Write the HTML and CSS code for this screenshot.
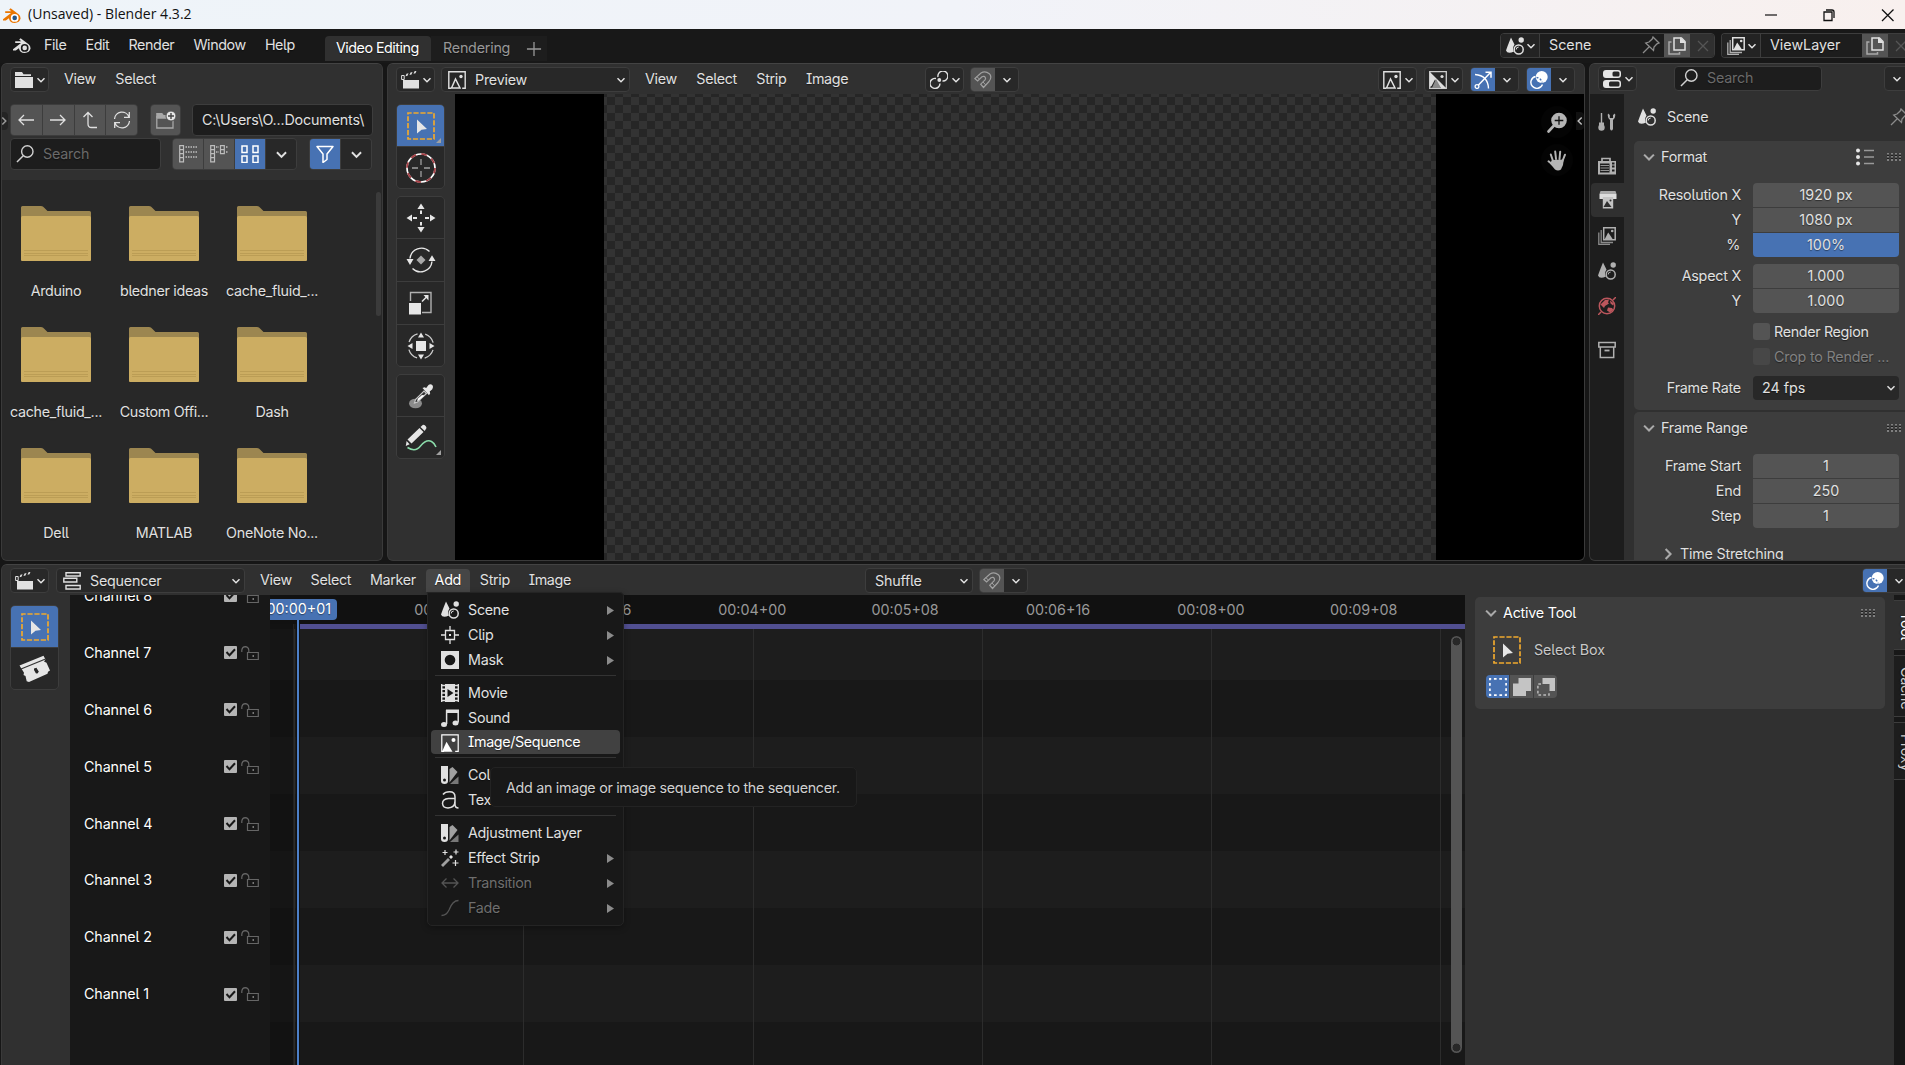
FILE: index.html
```html
<!DOCTYPE html>
<html lang="en">
<head>
<meta charset="utf-8">
<title>(Unsaved) - Blender 4.3.2</title>
<link rel="stylesheet" href="styles.css">
</head>
<body>
<svg class="defs" width="0" height="0" aria-hidden="true">
  <symbol id="logo" viewBox="0 0 20 18"><path d="M1 13.2 9 7H3.2V5.2H9.3L7.2 3.5 8.6 2.2 16.6 8.300Q19 10.300 18.600 12.600 17.700 16.800 12.600 17 7.600 16.700 6.900 12.200L3.800 14.500H1Z" fill="currentColor"/><circle cx="12.700" cy="11.900" r="3.900" fill="var(--hole,#181818)"/><circle cx="12.700" cy="11.900" r="2.300" fill="var(--eye,currentColor)"/></symbol>
  <symbol id="chev" viewBox="0 0 10 10"><path d="M1.500 3.300 5 6.800 8.500 3.300" fill="none" stroke="currentColor" stroke-width="1.500"/></symbol>
  <symbol id="files" viewBox="0 0 18 18"><path d="M0 1h7l1.500 2.300H16V5H0ZM0 6h18v11H0Z" fill="currentColor"/></symbol>
  <symbol id="clap" viewBox="0 0 18 18"><path d="M2 9h16v8.500H2Z" fill="currentColor"/><path d="M.6 4.500h2.600v4H.6Z" fill="none" stroke="currentColor" stroke-width="1"/><path d="m4.500 5.300 1-2.500 2-.5-1 2.500ZM8.500 4l1-2.500 2-.5-1 2.500ZM12.500 2.800l1-2.500 2-.5-1 2.500Z" fill="currentColor"/></symbol>
  <symbol id="image" viewBox="0 0 18 18"><path d="M3 17.200H.8V.8h16.400v16.400h-3" fill="none" stroke="currentColor" stroke-width="1.400"/><path d="m3.500 17 4-9 4.500 9Z" fill="none" stroke="currentColor" stroke-width="1.500"/><circle cx="13" cy="5.500" r="1.700" fill="currentColor"/></symbol>
  <symbol id="imagefill" viewBox="0 0 18 18"><path d="M3 17.300H.8V.8h16.400v16.500h-3" fill="none" stroke="currentColor" stroke-width="1.200"/><path d="m1 17.800 4.500-10 6 10Z" fill="currentColor"/><circle cx="12.500" cy="6" r="2" fill="currentColor"/></symbol>
  <symbol id="left" viewBox="0 0 18 18"><path d="M17 9H2M7 4 2 9l5 5" fill="none" stroke="currentColor" stroke-width="1.300"/></symbol>
  <symbol id="right" viewBox="0 0 18 18"><path d="M1 9h15M11 4l5 5-5 5" fill="none" stroke="currentColor" stroke-width="1.300"/></symbol>
  <symbol id="parent" viewBox="0 0 18 18"><path d="M7 1.500V13q0 3.500 3.500 3.500H16M2.500 6 7 1.500 11.500 6" fill="none" stroke="currentColor" stroke-width="1.300"/></symbol>
  <symbol id="refresh" viewBox="0 0 18 18"><path d="M1.500 8A7.500 7.500 0 0 1 16 6M16.500 10A7.500 7.500 0 0 1 2 12M16.300 1v5.300H11M1.700 17v-5.300H7" fill="none" stroke="currentColor" stroke-width="1.300"/></symbol>
  <symbol id="newfolder" viewBox="0 0 20 18"><path d="M.8 17V5M.8 7H17v10H.8Z" fill="none" stroke="#a8a8a8" stroke-width="1.300"/><path d="M.2 2h6l1.500 2h3v3H.2Z" fill="#a8a8a8"/><circle cx="15" cy="5" r="5" fill="#e6e6e6" stroke="#545454"/><path d="M12 5h6M15 2v6" stroke="#444" stroke-width="1.400"/></symbol>
  <symbol id="search" viewBox="0 0 18 18"><circle cx="11.300" cy="6.500" r="5.700" fill="none" stroke="currentColor" stroke-width="1.400"/><path d="M7.200 10.700 1 17" stroke="currentColor" stroke-width="1.500"/></symbol>
  <symbol id="vlist" viewBox="0 0 18 18"><path d="M.7.7h3.800v16.200H.7ZM.7 4.700h3.800M.7 8.700h3.800M.7 12.700h3.800" fill="none" stroke="#bdbdbd" stroke-width="1.200"/><path d="M6.500 2h11.500M6.500 7h11.500M6.500 12h11.500" stroke="#bdbdbd" stroke-width="1.500" stroke-dasharray="1.500 1"/></symbol>
  <symbol id="hlist" viewBox="0 0 18 18"><path d="M.7.7h3.800v16.200H.7ZM.7 4.700h3.800M.7 8.700h3.800M.7 12.700h3.800M10.500.7h3.800v8h-3.800ZM10.500 4.700h3.800" fill="none" stroke="#bdbdbd" stroke-width="1.200"/><path d="M6 2h3M6 7h3M16 2h2M16 7h2" stroke="#bdbdbd" stroke-width="1.500" stroke-dasharray="1.500 1"/></symbol>
  <symbol id="thumbs" viewBox="0 0 18 18"><path d="M1 1h5v6.500H1ZM12 1h5v6.500h-5ZM1 11h5v6.500H1ZM12 11h5v6.500h-5Z" fill="none" stroke="#fff" stroke-width="1.500"/></symbol>
  <symbol id="filter" viewBox="0 0 18 18"><path d="M1 1.500h16L11 9v5.500L7 17.500V9Z" fill="none" stroke="#fff" stroke-width="1.500" stroke-linejoin="round"/></symbol>
  <symbol id="folder" viewBox="0 0 70 56"><path d="M0 2.500Q0 1 1.500 1H20q2 0 3.500 2l3 3H68.500Q70 6 70 7.500V30H0Z" fill="#9c8650"/><path d="M0 12.500Q0 11 1.500 11h67q1.500 0 1.500 1.500V55q0 1-1 1H1q-1 0-1-1Z" fill="#ccad62"/><path d="M3 45.500h64M3 48.500h64M3 50.500h64" stroke="#bb9d55"/></symbol>
  <symbol id="selbox" viewBox="0 0 28 28"><rect x="1" y="1" width="26" height="26" fill="none" stroke="#f0a92e" stroke-width="1.700" stroke-dasharray="5.200 1.740" stroke-dashoffset="1.500"/><path d="m10 7.500 10 9.500-5.500.7L10 21.500Z" fill="#e6e6e6"/></symbol>
  <symbol id="cursor3d" viewBox="0 0 30 30"><circle cx="15" cy="15" r="14" fill="none" stroke="#fff" stroke-width="1.700"/><circle cx="15" cy="15" r="14" fill="none" stroke="#a64147" stroke-width="1.800" stroke-dasharray="5.500 5.500"/><path d="M15 6v6M15 18v6M6 15h6M18 15h6" stroke="#a0a0a0" stroke-width="1.300"/></symbol>
  <symbol id="move" viewBox="0 0 30 30"><path d="m15 .5 3.600 5.500h-7.200ZM15 29.500l-3.600-5.500h7.200ZM.5 15 6 11.400v7.200ZM29.500 15 24 11.400v7.200Z" fill="#e6e6e6"/><path d="M15 7.500v3.500M15 19v3.500M7 15h4M19 15h4" stroke="#e6e6e6" stroke-width="2"/></symbol>
  <symbol id="rotate" viewBox="0 0 30 30"><path d="M4 13.500A11.500 11.500 0 0 1 23.500 6.500M26 16.500A11.500 11.500 0 0 1 6.500 23.500" fill="none" stroke="#e6e6e6" stroke-width="1.400"/><path d="M.5 14h7L4 20ZM22.500 16h7L26 10.200Z" fill="#e6e6e6"/><path d="m15 10.500 4.500 4.500-4.500 4.500-4.500-4.500Z" fill="#a8a8a8"/></symbol>
  <symbol id="scale" viewBox="0 0 24 24"><path d="M1.500 10V1.500H22v20h-9" fill="none" stroke="#b0b0b0" stroke-width="1.400"/><rect y="12" width="12" height="11.500" fill="#e6e6e6"/><path d="m13 10.500 5-5" stroke="#e6e6e6" stroke-width="1.400"/><path d="M14.500 4h5v5.500Z" fill="#e6e6e6"/></symbol>
  <symbol id="xform" viewBox="0 0 28 28"><circle cx="14" cy="14" r="12.600" fill="none" stroke="#ccc" stroke-width="1.300" stroke-dasharray="12 7.790" stroke-dashoffset="-3.900"/><path d="M9 9h10v10H9ZM14 .5l3 5h-6ZM14 27.500l-3-5h6ZM.5 14l5-3v6ZM27.500 14l-5-3v6Z" fill="#e6e6e6"/></symbol>
  <symbol id="dropper" viewBox="0 0 28 28"><ellipse cx="8.500" cy="21.500" rx="6.500" ry="4.800" fill="#8b8b8b"/><path d="m7.500 21 1-3.500L17 9l2.500 2.500-9 8.500Z" fill="#333" stroke="#c4c4c4" stroke-width="1.200"/><path d="m10 19 1-2.500 4-3.500 2.500.5-6 5Z" fill="#fff"/><path d="m15.500 6 2-.8 1.700.8L21.500 3q2-1.800 4 .3 1.300 2-.2 4L22.700 9.500l.5 1.700-1.200 2Z" fill="#e6e6e6"/></symbol>
  <symbol id="annotate" viewBox="0 0 32 28"><path d="M2.500 23.500q8 5 13-1.500 6-7 11-4.500 3.500 2 4.500 5.500" fill="none" stroke="#8bdcaa" stroke-width="1.500"/><path d="m.8 22 .8-5 3 3.200ZM2.500 15.500 14.500 4 18.500 8 6.500 19.500ZM15.500 3 18 .8q3 .2 3.500 3.200L19.700 7Z" fill="#e6e6e6"/></symbol>
  <symbol id="pivot" viewBox="0 0 18 18"><path d="M6 7.500A5 5 0 1 0 10 12.500M8 6A5 5 0 1 1 12.500 10" fill="none" stroke="currentColor" stroke-width="1.400"/><circle cx="9.300" cy="9" r="1.900" fill="currentColor"/></symbol>
  <symbol id="magnet" viewBox="0 0 18 18"><path d="M.8 7.500 3.600 10 8 5.800q2.300-1.300 3.400 1 .4 1-.4 2L6.700 13.200 9.500 16.500 15 10.500Q18.500 6 15.300 2.700 11.200-.6 7 2Z" fill="none" stroke="#a0a0a0" stroke-width="1.200"/><path d="m2.800 5.500 2.600 2.600M9 11l2.800 3" stroke="#a0a0a0"/></symbol>
  <symbol id="alpha" viewBox="0 0 18 18"><path d="M.7.7h16.600v16.600H.7Z" fill="none" stroke="#ccc" stroke-width="1.300"/><path d="M.7.7 17.300 17.300H12L6 8.500 2.500 15 .7 16Z" fill="#ddd"/><path d="m3 17 4-9 5 9Z" fill="#8b8b8b"/><circle cx="13" cy="5.500" r="1.600" fill="#ddd"/></symbol>
  <symbol id="gizmo" viewBox="0 0 18 18"><path d="M1 3.500Q14 4.500 14.500 17.500" fill="none" stroke="#fff" stroke-width="1.400"/><path d="m4 14.500 12.500-13M11.500 1.200H17v5.500" fill="none" stroke="#fff" stroke-width="1.500"/><circle cx="3" cy="15.500" r="1.900" fill="#4772b3" stroke="#fff" stroke-width="1.300"/></symbol>
  <symbol id="overlay" viewBox="0 0 18 18"><circle cx="11.700" cy="6" r="6" fill="#fff"/><path d="M5.500 5.500A6 6 0 1 0 12.500 13.500" fill="none" stroke="#fff" stroke-width="1.400"/><path d="M6.500 6.500A6 6 0 0 1 12 11.500" fill="none" stroke="#4772b3" stroke-width="1.400" stroke-dasharray="2 1.500"/></symbol>
  <symbol id="zoomin" viewBox="0 0 20 21"><circle cx="12" cy="8.500" r="7.800" fill="#b4b4b4"/><path d="m7 13.500-5.500 6" stroke="#b4b4b4" stroke-width="2.600" stroke-linecap="round"/><path d="M12 4.200v8.600M7.700 8.500h8.600" stroke="#111" stroke-width="1.300"/></symbol>
  <symbol id="hand" viewBox="0 0 20 21"><path d="M6 11 3.800 4.500M9 9 8.200 1.500M12.500 9l.7-7.300M15.500 11l2.500-6.300M6 15 1.500 11.300" stroke="#b4b4b4" stroke-width="2" stroke-linecap="round"/><path d="M5 10 16.500 9.500Q17 15 14 19.500 11 21.500 8 19.500L3 13.500Z" fill="#b4b4b4"/></symbol>
  <symbol id="tools" viewBox="0 0 18 18"><path d="M3.500 0v10" stroke="currentColor" stroke-width="1.400"/><path d="M1 9.500h5v2.500H1Z" fill="currentColor"/><circle cx="3.500" cy="14.500" r="3.200" fill="currentColor"/><path d="M10 .5 11.800 2v3h3.200V2L17 .5q1 4-2 6.500V16q-1.500 3-3 0V7Q9 4.500 10 .5Z" fill="currentColor"/></symbol>
  <symbol id="render" viewBox="0 0 18 18"><path d="M4 4V1.500h8V4" fill="none" stroke="currentColor" stroke-width="1.700"/><path d="M0 4h18v13.500H0Z" fill="currentColor"/><path d="M2 6.500h9.500v9H2Z" fill="#1d1d1d"/><path d="M2.500 8.500h8.500M2.500 11h8.500M2.500 13.500h8.500" stroke="currentColor" stroke-width=".8"/><path d="M14 6.500h2.500M14 9.500h2.500M14 13.500h2.500" stroke="#1d1d1d" stroke-width="1.800"/></symbol>
  <symbol id="output" viewBox="0 0 18 18"><path d="M.5 3h17v5h-17Z" fill="#ddd"/><path d="M1.500 0h15l1 3H.5Z" fill="#aaa"/><path d="M3.800 6h10.400v11.500H3.800Z" fill="#c4c4c4"/><path d="m4.500 16 3.500-6 4.500 6Z" fill="#303030"/><circle cx="11.500" cy="9.500" r="1" fill="#303030"/></symbol>
  <symbol id="vlayer" viewBox="0 0 18 18"><path d="M5.700.8h11.500v12H5.700Z" fill="none" stroke="currentColor" stroke-width="1.500"/><path d="m6.500 12.500 3.700-7 4.800 7Z" fill="currentColor"/><circle cx="14.200" cy="4" r="1.300" fill="currentColor"/><path d="M3.200 3v12.500H15M.8 5.500V17.300H12" fill="none" stroke="currentColor" stroke-opacity=".75" stroke-width="1.300"/></symbol>
  <symbol id="scene" viewBox="0 0 18 18"><path d="M5 .5q1.500 3 3.500 7-1.500 2-1.500 5l1 2Q1.500 17.500 0 13.500 1.500 9 5 .5Z" fill="currentColor"/><circle cx="15.200" cy="3" r="2.700" fill="currentColor"/><circle cx="12.700" cy="12.500" r="4.500" fill="none" stroke="currentColor" stroke-width="1.500"/><path d="M10.200 12.500q0-2.500 2.500-2.500" fill="none" stroke="currentColor"/></symbol>
  <symbol id="world" viewBox="0 0 18 18"><circle cx="9" cy="9" r="7.700" fill="none" stroke="#bb565c" stroke-width="1.500"/><path d="M2.500 7.500 7 3l4-.5-1 3 1 1-4 2.500-1 2ZM10 10.500l4 .5 1.500 2-3.500 2.500-3-2ZM12 3.500l4 3-1 2-2.500-2Z" fill="#bb565c"/><path d="m0 18 3-3M15 3l3-3" stroke="#bb565c" stroke-width="1.500"/></symbol>
  <symbol id="archive" viewBox="0 0 18 18"><path d="M.8 1.500h16.400V6H.8ZM2.300 6v10.500h13.400V6" fill="none" stroke="currentColor" stroke-width="1.500"/><path d="M6.500 9.500h5" stroke="currentColor" stroke-width="1.800"/></symbol>
  <symbol id="pin" viewBox="0 0 18 18"><path d="m11 1 6 6-2 .8-3 3.200-.5 3.500L3.700 7 7 6l3.200-3ZM7 11l-6 6" fill="none" stroke="#8b8b8b" stroke-width="1.300"/></symbol>
  <symbol id="copy" viewBox="0 0 18 18"><path d="M6 1h7.500L17 4.500V13H6Z" fill="none" stroke="#e0e0e0" stroke-width="1.500"/><path d="M12 0v6h6Z" fill="#e0e0e0"/><path d="M3.500 5H1v12h10.500v-2" fill="none" stroke="#a8a8a8" stroke-width="1.500"/></symbol>
  <symbol id="cross" viewBox="0 0 12 12"><path d="m1 1 10 10M11 1 1 11" stroke="currentColor" stroke-width="1.300"/></symbol>
  <symbol id="props" viewBox="0 0 18 18"><rect y="0" width="18" height="8" rx="3" fill="#e6e6e6"/><rect x="9.500" y="1.500" width="7" height="5" rx="1.500" fill="#282828"/><rect y="10" width="18" height="8" rx="3" fill="#e6e6e6"/><rect x="6" y="11.500" width="10.500" height="5" rx="1.500" fill="#282828"/></symbol>
  <symbol id="presets" viewBox="0 0 18 18"><circle cx="2" cy="2.500" r="2" fill="#e6e6e6"/><circle cx="2" cy="9" r="2" fill="#e6e6e6"/><circle cx="2" cy="15.500" r="2" fill="#e6e6e6"/><path d="M8 2.500h10M8 9h10M8 15.500h10" stroke="#999" stroke-width="1.300"/></symbol>
  <symbol id="grip" viewBox="0 0 15 8"><path d="M0 1h15M0 4h15M0 7h15" stroke="#979797" stroke-width="1.500" stroke-dasharray="2 2"/><path d="M0 2.200h15M0 5.200h15" stroke="#111" stroke-dasharray="2 2"/></symbol>
  <symbol id="seq" viewBox="0 0 18 18"><path d="M3 .8h14.200V4H3ZM.8 6.300h13V10H.8ZM3 13.500h14.200V17H3Z" fill="none" stroke="currentColor" stroke-width="1.400"/></symbol>
  <symbol id="blade" viewBox="0 0 32 28"><path d="M.5 10.500 24.500.8l2 3.700-1.500 2 2.500 1.200L31 15.500l-2 1.200-.5 2L10 27l-2.300-.7L6.500 21l-2-1 .5-2.300Z" fill="#e6e6e6"/><path d="m2 14 24.500-10" stroke="#333" stroke-width="1.200"/><path d="m15 13.500 2.500-.8 2 3.500-.5 2-2 .3-2-3.500Z" fill="#282828"/></symbol>
  <symbol id="check" viewBox="0 0 13 13"><rect width="13" height="13" rx="1" fill="#b4b4b4"/><path d="m2.500 6 3 3.300 5.500-6" fill="none" stroke="#181818" stroke-width="2"/></symbol>
  <symbol id="lock" viewBox="0 0 18 14"><path d="M.8 6V4q.5-3 3.500-3.300Q7.500 1 7.800 4v2M6.500 6.500h10.800v7H6.500Z" fill="none" stroke="#666" stroke-width="1.200"/><path d="M11.500 9h1.500v2h-1.500Z" fill="#777"/></symbol>
  <symbol id="clip" viewBox="0 0 18 18"><path d="M9 0v4M9 14v4M0 9h4M14 9h4M4.500 4.500h9v9h-9Z" fill="none" stroke="currentColor" stroke-width="1.300"/><path d="M8 8h2v2H8Z" fill="currentColor"/></symbol>
  <symbol id="mask" viewBox="0 0 18 18"><path d="M0 0h18v18H0Z" fill="currentColor"/><circle cx="9" cy="9" r="5.300" fill="#181818"/></symbol>
  <symbol id="movie" viewBox="0 0 18 18"><path d="M4 0h10v18H4Z" fill="currentColor"/><path d="M.7 0v18M17.300 0v18M0 1.500h4M0 5.200h4M0 9h4M0 12.800h4M0 16.500h4M14 1.500h4M14 5.200h4M14 9h4M14 12.800h4M14 16.500h4" stroke="currentColor" stroke-width="1.400"/><path d="m6.500 5 6 4-6 4Z" fill="#181818"/></symbol>
  <symbol id="sound" viewBox="0 0 18 18"><path d="M5 .5h13v3.500H5Z" fill="currentColor"/><path d="M5.600 1v14M17.200 1v12.500" stroke="currentColor" stroke-width="1.500"/><ellipse cx="3" cy="15.500" rx="3" ry="2.500" fill="currentColor"/><ellipse cx="14.500" cy="14" rx="3" ry="2.500" fill="currentColor"/></symbol>
  <symbol id="color" viewBox="0 0 18 18"><path d="M0 0h7v15q0 3-3.500 3T0 15Z" fill="currentColor"/><path d="m8.500 3 3-2 5 5-8 10.500Z" fill="#a0a0a0"/><path d="M17.500 10.500V18H9Z" fill="#777"/><circle cx="3.500" cy="14" r="1.500" fill="#181818"/></symbol>
  <symbol id="glyph" viewBox="0 0 18 18"><path d="M2 3.500Q4 .8 8.500.8 14 .8 14 6v7.500q0 3.500 3.500 3.500M14 7.500H7.500Q1.500 8 1.500 12.500 2 17 7 17q7-.5 7-7" fill="none" stroke="currentColor" stroke-width="1.500"/></symbol>
  <symbol id="wand" viewBox="0 0 18 18"><path d="M1 17 8 10" stroke="#a0a0a0" stroke-width="2.800"/><path d="m9 9 2-2" stroke="#e6e6e6" stroke-width="2.800"/><path d="M4 1v5M1.500 3.500h5M15 .5v5M12.500 3h5M14.500 11v6M11.500 14h6" stroke="currentColor" stroke-width="1.200"/></symbol>
  <symbol id="trans" viewBox="0 0 18 18"><path d="M1.500 9h15M5.500 4.500 1 9l4.500 4.500M12.500 4.500 17 9l-4.500 4.500" fill="none" stroke="currentColor" stroke-width="1.300"/></symbol>
  <symbol id="fade" viewBox="0 0 18 18"><path d="M.5 16.500Q5.500 16.500 8 11 11.500 1.500 17.500 1.500" fill="none" stroke="currentColor" stroke-width="1.300"/></symbol>
  <symbol id="arrow" viewBox="0 0 7 9"><path d="M0 0 7 4.500 0 9Z" fill="#8b8b8b"/></symbol>
  <symbol id="mset" viewBox="0 0 18 18"><path d="M.9.900h16.200v16.200H.9Z" fill="none" stroke="#fff" stroke-width="1.700" stroke-dasharray="2.700 2.700" stroke-dashoffset="1.400"/></symbol>
  <symbol id="madd" viewBox="0 0 18 18"><path d="M5.500 0H18v13h-5v5H0V5.500h5.500Z" fill="#c4c4c4"/></symbol>
  <symbol id="msub" viewBox="0 0 18 18"><path d="M5.500 0H18v13h-5.500V6h-7Z" fill="#c4c4c4"/><path d="M4 6H.9v11.100H12V14" fill="none" stroke="#bbb" stroke-width="1.500" stroke-dasharray="2.700 2.200"/></symbol>
</svg>

<div class="titlebar">
  <svg class="app-icon"><use href="#logo"/></svg><span class="title">(Unsaved) - Blender 4.3.2</span>
  <svg class="win" viewBox="0 0 130 16"><path d="M1 8h12" stroke="#111" stroke-width="1.200"/><path d="M60 5h8v8.500h-8ZM62 3h6q2 0 2 2v6" fill="none" stroke="#111" stroke-width="1.300"/><path d="m118 2.500 11.500 11.500M129.500 2.500 118 14" stroke="#111" stroke-width="1.300"/></svg>
</div>

<div class="topbar">
  <svg class="logo"><use href="#logo"/></svg>
  <nav class="menus"><span>File</span><span>Edit</span><span>Render</span><span>Window</span><span>Help</span></nav>
  <div class="tabs"><span class="tab on">Video Editing</span><span class="tab">Rendering</span><span class="tab plus"><svg class="i12"><use href="#cross"/></svg></span></div>
  <div class="idblock scene-id"><span class="dd"><svg class="i18"><use href="#scene"/></svg><svg class="chev"><use href="#chev"/></svg></span><span class="name">Scene<svg class="i18"><use href="#pin"/></svg></span><span class="cp"><svg class="i18"><use href="#copy"/></svg></span><span class="x"><svg class="i12"><use href="#cross"/></svg></span></div>
  <div class="idblock layer-id"><span class="dd"><svg class="i18"><use href="#vlayer"/></svg><svg class="chev"><use href="#chev"/></svg></span><span class="name">ViewLayer</span><span class="cp"><svg class="i18"><use href="#copy"/></svg></span><span class="x"><svg class="i12"><use href="#cross"/></svg></span></div>
</div>

<div class="upper">
  <section class="area files">
    <header class="head"><span class="btn dd"><svg class="i18"><use href="#files"/></svg><svg class="chev"><use href="#chev"/></svg></span><nav class="menus m16"><span>View</span><span>Select</span></nav></header>
    <div class="frow">
      <span class="edge-tab"><svg class="chev r270"><use href="#chev"/></svg></span>
      <div class="group g4"><span><svg class="i18"><use href="#left"/></svg></span><span><svg class="i18"><use href="#right"/></svg></span><span><svg class="i18"><use href="#parent"/></svg></span><span><svg class="i18"><use href="#refresh"/></svg></span></div>
      <div class="group newf"><span><svg class="i20"><use href="#newfolder"/></svg></span></div>
      <div class="path">C:\Users\O...Documents\</div>
    </div>
    <div class="frow second">
      <div class="field"><svg class="i18"><use href="#search"/></svg>Search</div>
      <div class="group disp"><span><svg class="i18"><use href="#vlist"/></svg></span><span><svg class="i18"><use href="#hlist"/></svg></span><span class="blue"><svg class="i18"><use href="#thumbs"/></svg></span><span class="dark"><svg class="chev big"><use href="#chev"/></svg></span></div>
      <div class="group filt"><span class="blue"><svg class="i18"><use href="#filter"/></svg></span><span class="dark"><svg class="chev big"><use href="#chev"/></svg></span></div>
    </div>
    <div class="list">
      <div class="grid">
        <figure><svg><use href="#folder"/></svg><figcaption>Arduino</figcaption></figure>
        <figure><svg><use href="#folder"/></svg><figcaption>bledner ideas</figcaption></figure>
        <figure><svg><use href="#folder"/></svg><figcaption>cache_fluid_...</figcaption></figure>
        <figure><svg><use href="#folder"/></svg><figcaption>cache_fluid_...</figcaption></figure>
        <figure><svg><use href="#folder"/></svg><figcaption>Custom Offi...</figcaption></figure>
        <figure><svg><use href="#folder"/></svg><figcaption>Dash</figcaption></figure>
        <figure><svg><use href="#folder"/></svg><figcaption>Dell</figcaption></figure>
        <figure><svg><use href="#folder"/></svg><figcaption>MATLAB</figcaption></figure>
        <figure><svg><use href="#folder"/></svg><figcaption>OneNote No...</figcaption></figure>
      </div>
      <div class="thumb"></div>
    </div>
  </section>

  <section class="area preview">
    <header class="head">
      <span class="btn dd"><svg class="i18"><use href="#clap"/></svg><svg class="chev"><use href="#chev"/></svg></span>
      <span class="btn select"><svg class="i18"><use href="#image"/></svg><b>Preview</b><svg class="chev"><use href="#chev"/></svg></span>
      <nav class="menus m16"><span>View</span><span>Select</span><span>Strip</span><span>Image</span></nav>
      <span class="btn dd pivot"><svg class="i18"><use href="#pivot"/></svg><svg class="chev"><use href="#chev"/></svg></span>
      <span class="btn pair"><i class="grey"><svg class="i18"><use href="#magnet"/></svg></i><i><svg class="chev"><use href="#chev"/></svg></i></span>
      <span class="spring"></span>
      <span class="btn dd"><svg class="i18"><use href="#image"/></svg><svg class="chev"><use href="#chev"/></svg></span>
      <span class="btn dd"><svg class="i18"><use href="#alpha"/></svg><svg class="chev"><use href="#chev"/></svg></span>
      <span class="btn pair"><i class="blue"><svg class="i18"><use href="#gizmo"/></svg></i><i><svg class="chev"><use href="#chev"/></svg></i></span>
      <span class="btn pair last"><i class="blue"><svg class="i18"><use href="#overlay"/></svg></i><i><svg class="chev"><use href="#chev"/></svg></i></span>
    </header>
    <div class="pbody">
      <div class="toolcol">
        <div class="tools"><span class="blue corner"><svg class="i28"><use href="#selbox"/></svg></span><span><svg class="i30"><use href="#cursor3d"/></svg></span></div>
        <div class="tools"><span><svg class="i30"><use href="#move"/></svg></span><span><svg class="i30"><use href="#rotate"/></svg></span><span><svg class="i24"><use href="#scale"/></svg></span><span><svg class="i28"><use href="#xform"/></svg></span></div>
        <div class="tools"><span><svg class="i28"><use href="#dropper"/></svg></span><span class="corner"><svg class="i32"><use href="#annotate"/></svg></span></div>
      </div>
      <div class="viewport"><div class="checker"></div><div class="navs"><span><svg class="i20 tall"><use href="#zoomin"/></svg></span><span><svg class="i20 tall"><use href="#hand"/></svg></span></div><span class="edge-tab rt"><svg class="chev r90"><use href="#chev"/></svg></span></div>
    </div>
  </section>

  <section class="area properties">
    <header class="head"><span class="btn dd"><svg class="i18"><use href="#props"/></svg><svg class="chev"><use href="#chev"/></svg></span><div class="field small"><svg class="i18"><use href="#search"/></svg>Search</div><span class="btn opt"><svg class="chev"><use href="#chev"/></svg></span></header>
    <div class="prbody">
      <div class="ptabs"><span class="first"><svg class="i18"><use href="#tools"/></svg></span><span><svg class="i18"><use href="#render"/></svg></span><span class="on"><svg class="i18"><use href="#output"/></svg></span><span><svg class="i18"><use href="#vlayer"/></svg></span><span><svg class="i18"><use href="#scene"/></svg></span><span><svg class="i18"><use href="#world"/></svg></span><span class="lastt"><svg class="i18"><use href="#archive"/></svg></span></div>
      <div class="pmain">
        <div class="crumb"><svg class="i18"><use href="#scene"/></svg>Scene<svg class="i18 pinr"><use href="#pin"/></svg></div>
        <div class="panel format">
          <div class="ptitle"><svg class="chev tri"><use href="#chev"/></svg><span>Format</span><svg class="i18 pre"><use href="#presets"/></svg><svg class="grip"><use href="#grip"/></svg></div>
          <div class="rows">
            <label>Resolution X</label><div class="num top">1920 px</div>
            <label>Y</label><div class="num">1080 px</div>
            <label class="pct">%</label><div class="num bot fill">100%</div>
            <label class="sp">Aspect X</label><div class="num top sp">1.000</div>
            <label>Y</label><div class="num bot">1.000</div>
            <div class="cb sp"><i></i>Render Region</div>
            <div class="cb off"><i></i>Crop to Render ...</div>
            <label class="sp2">Frame Rate</label><div class="enum sp2">24 fps<svg class="chev"><use href="#chev"/></svg></div>
          </div>
        </div>
        <div class="panel range">
          <div class="ptitle"><svg class="chev tri"><use href="#chev"/></svg><span>Frame Range</span><svg class="grip"><use href="#grip"/></svg></div>
          <div class="rows">
            <label>Frame Start</label><div class="num top">1</div>
            <label>End</label><div class="num">250</div>
            <label>Step</label><div class="num bot">1</div>
          </div>
          <div class="sub"><svg class="chev tri r270"><use href="#chev"/></svg>Time Stretching</div>
        </div>
      </div>
    </div>
  </section>
</div>

<section class="area sequencer">
  <header class="head">
    <span class="btn dd"><svg class="i18"><use href="#clap"/></svg><svg class="chev"><use href="#chev"/></svg></span>
    <span class="btn select"><svg class="i18"><use href="#seq"/></svg><b>Sequencer</b><svg class="chev"><use href="#chev"/></svg></span>
    <nav class="menus seqm"><span>View</span><span>Select</span><span>Marker</span><span class="open">Add</span><span>Strip</span><span>Image</span></nav>
    <span class="btn select shuffle"><b>Shuffle</b><svg class="chev"><use href="#chev"/></svg></span>
    <span class="btn pair"><i class="grey"><svg class="i18"><use href="#magnet"/></svg></i><i><svg class="chev"><use href="#chev"/></svg></i></span>
    <span class="btn pair ovl"><i class="blue"><svg class="i18"><use href="#overlay"/></svg></i><i><svg class="chev"><use href="#chev"/></svg></i></span>
  </header>
  <div class="sbody">
    <div class="toolcol"><div class="tools"><span class="blue"><svg class="i28"><use href="#selbox"/></svg></span><span><svg class="i32"><use href="#blade"/></svg></span></div></div>
    <div class="channels">
      <div>Channel 8<svg class="ck"><use href="#check"/></svg><svg class="lk"><use href="#lock"/></svg></div>
      <div>Channel 7<svg class="ck"><use href="#check"/></svg><svg class="lk"><use href="#lock"/></svg></div>
      <div>Channel 6<svg class="ck"><use href="#check"/></svg><svg class="lk"><use href="#lock"/></svg></div>
      <div>Channel 5<svg class="ck"><use href="#check"/></svg><svg class="lk"><use href="#lock"/></svg></div>
      <div>Channel 4<svg class="ck"><use href="#check"/></svg><svg class="lk"><use href="#lock"/></svg></div>
      <div>Channel 3<svg class="ck"><use href="#check"/></svg><svg class="lk"><use href="#lock"/></svg></div>
      <div>Channel 2<svg class="ck"><use href="#check"/></svg><svg class="lk"><use href="#lock"/></svg></div>
      <div>Channel 1<svg class="ck"><use href="#check"/></svg><svg class="lk"><use href="#lock"/></svg></div>
    </div>
    <div class="timeline">
      <div class="ruler"><span>00:01+08</span><span>00:02+16</span><span>00:04+00</span><span>00:05+08</span><span>00:06+16</span><span>00:08+00</span><span>00:09+08</span></div>
      <div class="rangebar"></div>
      <div class="tracks"></div>
      <div class="before"></div>
      <div class="playhead"></div><div class="frame">00:00+01</div>
      <div class="vscroll"></div>
    </div>
    <aside class="side">
      <div class="panel">
        <div class="ptitle"><svg class="chev tri"><use href="#chev"/></svg><span>Active Tool</span><svg class="grip"><use href="#grip"/></svg></div>
        <div class="tool"><svg class="i28"><use href="#selbox"/></svg>Select Box</div>
        <div class="modes"><span class="blue"><svg class="i18"><use href="#mset"/></svg></span><span><svg class="i18"><use href="#madd"/></svg></span><span><svg class="i18"><use href="#msub"/></svg></span></div>
      </div>
    </aside>
    <div class="vtabs"><span class="on">Tool</span><span class="cache">Cache</span><span class="proxy">Proxy</span></div>
  </div>
</section>

<div class="popup">
  <div class="item"><svg class="i18"><use href="#scene"/></svg>Scene<svg class="arr"><use href="#arrow"/></svg></div>
  <div class="item"><svg class="i18 mid"><use href="#clip"/></svg>Clip<svg class="arr"><use href="#arrow"/></svg></div>
  <div class="item"><svg class="i18"><use href="#mask"/></svg>Mask<svg class="arr"><use href="#arrow"/></svg></div>
  <hr>
  <div class="item"><svg class="i18"><use href="#movie"/></svg>Movie</div>
  <div class="item"><svg class="i18"><use href="#sound"/></svg>Sound</div>
  <div class="item hot"><svg class="i18"><use href="#imagefill"/></svg>Image/Sequence</div>
  <hr>
  <div class="item"><svg class="i18"><use href="#color"/></svg>Color</div>
  <div class="item"><svg class="i18"><use href="#glyph"/></svg>Text</div>
  <hr>
  <div class="item"><svg class="i18"><use href="#color"/></svg>Adjustment Layer</div>
  <div class="item"><svg class="i18"><use href="#wand"/></svg>Effect Strip<svg class="arr"><use href="#arrow"/></svg></div>
  <div class="item off"><svg class="i18"><use href="#trans"/></svg>Transition<svg class="arr"><use href="#arrow"/></svg></div>
  <div class="item off"><svg class="i18"><use href="#fade"/></svg>Fade<svg class="arr"><use href="#arrow"/></svg></div>
</div>
<div class="tooltip">Add an image or image sequence to the sequencer.</div>
</body>
</html>
```

FILE: styles.css
```css
* { box-sizing: border-box; }
body {
  margin: 0; width: 1905px; height: 1065px; overflow: hidden; position: relative;
  display: flex; flex-direction: column; background: #161616; color: #e0e0e0;
  font: 14.3px/20px Inter, "Liberation Sans", sans-serif; letter-spacing: -.22px;
  font-feature-settings: "ss04", "cv05", "cv08"; white-space: nowrap;
  text-shadow: 0 1px 1px rgba(0,0,0,.45);
}
.defs { position: absolute; }
svg { flex: none; display: block; }
.i12 { width: 12px; height: 12px; } .i18 { width: 18px; height: 18px; } .i20 { width: 20px; height: 18px; }
.i20.tall { height: 21px; }
.i24 { width: 24px; height: 24px; } .i28 { width: 28px; height: 28px; } .i30 { width: 30px; height: 30px; } .i32 { width: 32px; height: 28px; }
.chev { width: 10px; height: 10px; }
.chev.big { width: 13px; height: 13px; }
.chev.tri { width: 14px; height: 14px; color: #aaa; }
.r90 { transform: rotate(90deg); } .r270 { transform: rotate(-90deg); }
.blue { background: #4772b3 !important; }

.titlebar {
  height: 29px; flex: none; display: flex; align-items: center; padding: 0 11px 0 2px;
  background: linear-gradient(90deg, #eef4f9, #f1f3f9 50%, #f8f0ee); color: #111; text-shadow: none;
}
.app-icon { width: 20px; height: 18px; color: #ea7600; --hole: #fff; --eye: #265787; margin-right: 6px; }
.title { font: 14px/20px "Open Sans", sans-serif; letter-spacing: .03px; padding-bottom: 1px; }
.win { width: 130px; height: 16px; margin-left: auto; }

.topbar { height: 34px; flex: none; display: flex; background: #181818; position: relative; padding-left: 12px; }
.logo { width: 20px; height: 18px; margin: 7px 12px 0 0; }
.menus { display: flex; gap: 19.400px; flex: none; letter-spacing: -.3px; }
.topbar .menus { padding-top: 6px; width: 281px; gap: 19.100px; letter-spacing: -.4px; }
.tabs { display: flex; margin-top: 7px; height: 25px; flex: none; }
.tab { background: #1d1d1d; color: #989898; padding: 2px 12px 0 12px; width: 91px; }
.tab.on { background: #303030; color: #fff; width: 106px; padding-left: 11px; border-radius: 4px 4px 0 0; letter-spacing: -.5px; }
.tab.plus { width: 25px; padding: 7px 6px; }
.plus svg { transform: rotate(45deg); }
.idblock { display: flex; height: 25px; margin-top: 4px; border: 1px solid #3d3d3d; border-radius: 4px; background: #1d1d1d; overflow: hidden; letter-spacing: 0; flex: none; }
.idblock > span { display: flex; align-items: center; flex: none; }
.idblock .dd { width: 39px; background: #232323; border-right: 1px solid #3d3d3d; padding-left: 5px; gap: 2px; }
.idblock .name { width: 124px; padding: 0 4px 1px 9px; justify-content: space-between; }
.idblock .cp { width: 26px; background: #545454; justify-content: center; }
.idblock .x { width: 25px; background: #303030; color: #555; justify-content: center; }
.scene-id { width: 215px; margin-left: auto; margin-right: 6px; }
.layer-id { width: 184px; border-right: 0; border-radius: 4px 0 0 4px; }
.layer-id .name { width: 101px; }

.upper { height: 498px; flex: none; display: flex; gap: 4px; padding-left: 1px; margin-bottom: 3px; }
.area { background: #303030; border: 1px solid #434343; border-color: #434343 #3a3a3a #3a3a3a; border-radius: 6px; overflow: hidden; display: flex; flex-direction: column; }
.upper .area { flex: none; }
.head { height: 30px; flex: none; display: flex; align-items: flex-start; padding: 3px 0 0 8px; background: #303030; }
.btn { height: 25px; display: flex; align-items: center; background: #282828; border: 1px solid #3d3d3d; border-radius: 4px; overflow: hidden; flex: none; }
.btn.dd { width: 39px; padding-left: 4px; gap: 3px; }
.btn.select { width: 189px; padding: 0 3px 0 6px; margin-left: 7px; }
.preview .btn.select { margin-left: 6px; }
.btn b { font-weight: 400; margin: 0 auto 0 9px; }
.btn.pair { width: 49px; }
.btn.pair i { width: 24px; height: 23px; display: flex; align-items: center; justify-content: center; flex: none; }
.grey { background: #545454; }
.head .menus { margin-top: 2px; }
.m16 { margin-left: 15px; }
.spring { flex: 1; }

.files { width: 382px; }
.frow { display: flex; height: 32px; margin: 10px 0 0 8px; flex: none; position: relative; }
.frow.second { margin-top: 2px; }
.edge-tab { position: absolute; left: -10px; top: 8px; width: 8px; height: 18px; background: #242424; border-radius: 0 4px 4px 0; display: flex; align-items: center; justify-content: center; color: #999; }
.group { display: flex; height: 32px; border: 1px solid #3d3d3d; border-radius: 4px; overflow: hidden; background: #3d3d3d; gap: 1px; flex: none; }
.group span { flex: 1; background: #545454; display: flex; align-items: center; justify-content: center; }
.group .dark { background: #282828; }
.g4 { width: 128px; } .newf { width: 31px; margin-left: 12px; }
.path { margin-left: 11px; width: 181px; height: 32px; background: #1d1d1d; border: 1px solid #3d3d3d; border-radius: 4px; padding: 5px 0 0 9px; letter-spacing: -.17px; }
.field { width: 151px; height: 32px; display: flex; align-items: center; gap: 9px; background: #1d1d1d; border: 1px solid #3d3d3d; border-radius: 4px; padding-left: 5px; color: #6a6a6a; flex: none; }
.field svg { color: #d0d0d0; }
.disp { width: 125px; margin-left: 11px; } .filt { width: 63px; margin-left: 12px; }
.list { flex: 1; margin-top: 10px; background: #282828; display: flex; position: relative; min-height: 0; }
.grid { display: grid; grid-template-columns: repeat(3, 108px); grid-auto-rows: 121px; padding-top: 25px; }
figure { margin: 0; display: flex; flex-direction: column; align-items: center; }
figure svg { width: 70px; height: 56px; }
figcaption { margin-top: 20px; letter-spacing: -.3px; }
.thumb { margin: 12px 1px 0 auto; width: 5px; height: 124px; border-radius: 3px; background: #3b3b3b; }

.preview { width: 1198px; }
.preview .m16 { width: 280px; }
.pivot + .pair { margin-left: 6px; }
.spring ~ .dd, .spring ~ .pair { margin-left: 7px; }
.btn.last { margin-right: 9px; }
.pbody { flex: 1; display: flex; }
.toolcol { width: 67px; padding: 10px 0 0 8px; flex: none; display: flex; flex-direction: column; gap: 7px; }
.tools { width: 49px; border: 1px solid #3d3d3d; border-radius: 5px; background: #3d3d3d; display: flex; flex-direction: column; gap: 1px; overflow: hidden; }
.tools span { height: 42px; background: #282828; display: flex; align-items: center; justify-content: center; position: relative; }
.tools span:first-child, .tools span:last-child { height: 41px; }
.corner::after { content: ""; position: absolute; right: 3px; bottom: 3px; border: solid transparent; border-width: 0 0 5px 5px; border-bottom-color: #a0a0a0; }
.viewport { flex: 1; background: #000; position: relative; display: flex; padding-left: 149px; }
.checker { width: 832px; background: conic-gradient(#333 25%, #262626 0 50%, #333 0 75%, #262626 0) 3px 3px / 16px 16px; }
.navs { position: absolute; right: 11px; top: 12px; display: flex; flex-direction: column; gap: 6px; }
.navs span { width: 32px; height: 32px; border-radius: 50%; background: #040404; display: flex; align-items: center; justify-content: center; }
.edge-tab.rt { left: auto; right: 0; top: 18px; background: #101010; color: #bbb; }

.properties { width: 330px; }
.properties .head { padding-top: 2px; }
.field.small { width: 148px; height: 25px; margin-left: 37px; padding-bottom: 1px; }
.btn.opt { margin-left: 62px; width: 40px; padding-left: 7px; }
.prbody { flex: 1; display: flex; min-height: 0; }
.ptabs { width: 34px; background: #1d1d1d; padding-top: 10px; display: flex; flex-direction: column; color: #b0b0b0; }
.ptabs span { height: 35px; display: flex; align-items: center; justify-content: center; border-radius: 4px 0 0 4px; flex: none; }
.ptabs .first { margin-bottom: 9px; }
.ptabs .on { background: #303030; margin-left: 1px; height: 34px; margin-bottom: 1px; }
.ptabs .lastt { margin-top: 9px; }
.pmain { flex: 1; padding-left: 10px; overflow: hidden; }
.crumb { display: flex; align-items: center; gap: 11px; height: 47px; padding: 0 0 2px 4px; }
.pinr { margin-left: 171px; }
.panel { background: #3d3d3d; border-radius: 5px; }
.ptitle { height: 32px; display: flex; align-items: center; padding: 0 8px; position: relative; }
.ptitle span { margin: 0 auto 0 5px; }
.grip { width: 15px; height: 8px; }
.format { height: 269px; width: 285px; margin-bottom: 2px; }
.range { height: 180px; width: 285px; }
.format .ptitle, .range .ptitle { padding-right: 17px; }
.pre { margin-right: 13px; }
.rows { display: grid; grid-template-columns: 107px 146px; column-gap: 12px; grid-auto-rows: min-content; padding-top: 10px; }
.rows label { text-align: right; height: 25px; line-height: 23px; }
.rows .pct { padding-right: 1px; }
.num { height: 24px; margin-bottom: 1px; background: #545454; text-align: center; line-height: 23px; letter-spacing: .08px; }
.num.top { border-radius: 4px 4px 0 0; } .num.bot { border-radius: 0 0 4px 4px; }
.fill { background: #4772b3; }
.rows .sp { margin-top: 6px; }
.rows .sp2 { margin-top: 7px; }
.cb { grid-column: 2; display: flex; height: 25px; align-items: center; gap: 4px; letter-spacing: -.33px; }
.cb i { width: 17px; height: 17px; background: #545454; border-radius: 3px; flex: none; }
.rows .cb.sp { margin-top: 5px; }
.cb.off { color: #818181; letter-spacing: -.2px; } .cb.off i { background: #474747; }
.enum { height: 24px; background: #282828; border-radius: 4px; display: flex; justify-content: space-between; align-items: center; padding: 0 3px 1px 9px; letter-spacing: 0; }
.sub { display: flex; gap: 5px; align-items: center; padding: 15px 0 0 27px; }

.sequencer { flex: 1; margin-left: 1px; margin-right: -4px; border-radius: 6px 6px 0 0; border-bottom: 0; }
.seqm { margin-left: 15px; gap: 18.700px; width: 598px; }
.head .seqm { margin-top: 1px; }
.seqm span { padding-top: 1px; }
.seqm .open { background: #464646; color: #fff; height: 23px; margin: 0 -9px; padding: 1px 9px 0; border-radius: 4px 4px 0 0; }
.sequencer .btn.shuffle { width: 108px; margin-left: 7px; padding-left: 0; }
.sequencer .btn.pair { margin-left: 6px; }
.sequencer .btn.ovl { margin-left: auto; margin-right: -3px; }
.sbody { flex: 1; display: flex; min-height: 0; }
.sequencer .toolcol { width: 68px; }
.channels { width: 200px; background: #181818; color: #fff; overflow: hidden; flex: none; letter-spacing: -.12px; }
.channels div { height: 56.900px; display: flex; align-items: center; padding-left: 14px; }
.channels div:first-child { margin-top: -27.500px; }
.ck { width: 13px; height: 13px; margin-left: auto; }
.lk { width: 18px; height: 14px; margin: 0 11px 0 4px; }
.timeline { width: 1195px; position: relative; overflow: hidden; background: #181818; flex: none; letter-spacing: 0; }
.ruler { height: 29px; background: #111; display: flex; padding: 5px 0 0 100px; color: #999; text-shadow: none; }
.ruler span { width: 152.900px; text-align: center; flex: none; }
.rangebar { height: 5px; background: #514f91; margin-left: 29px; }
.tracks { height: 441px; background: repeating-linear-gradient(90deg, #2c2c2c 0 1px, transparent 1px 229.300px) 24px 0 no-repeat, repeating-linear-gradient(180deg, #1d1d1d 0 57px, #181818 57px 114px) 0 -6px / 100% 600px; }
.before { position: absolute; left: 0; top: 29px; width: 24px; bottom: 0; background: rgba(0,0,0,.25); border-right: 1px solid #222; }
.playhead { position: absolute; left: 27px; top: 20px; width: 2px; bottom: 0; background: #4d80c9; box-shadow: 0 0 0 1px #111; }
.frame { position: absolute; left: -12px; top: 4px; width: 79px; height: 21px; background: #4772b3; border-radius: 4px; color: #fff; text-align: right; padding-right: 6px; line-height: 20px; }
.vscroll { position: absolute; left: 1181px; top: 41px; width: 11px; height: 417px; border-radius: 6px; background: radial-gradient(circle at 5.500px 5.500px, #282828 3.700px, transparent 4.200px), radial-gradient(circle at 5.500px 411.500px, #282828 3.700px, transparent 4.200px), #545454; }
.side { width: 429px; padding: 2px 9px 0 10px; flex: none; }
.side .panel { height: 112px; }
.side .ptitle { padding: 0 9px; color: #fff; }
.tool { display: flex; align-items: center; gap: 13px; padding: 7px 0 0 18px; color: #c8c8c8; letter-spacing: -.1px; }
.modes { display: flex; gap: 1px; margin: 11px 0 0 11px; width: 71px; border-radius: 4px; overflow: hidden; }
.modes span { flex: 1; height: 23px; background: #545454; display: flex; align-items: center; justify-content: center; }
.vtabs { width: 30px; background: #181818; padding-top: 5px; flex: none; }
.vtabs span { display: block; writing-mode: vertical-rl; width: 30px; height: 62px; margin-bottom: 5px; background: #1d1d1d; border: solid #3d3d3d; border-width: 1px 0; line-height: 20px; padding: 11px 8px 0 0; color: #ccc; }
.vtabs .on { background: #303030; height: 50px; color: #fff; }
.vtabs .proxy { height: 58px; }

.popup { position: absolute; left: 427px; top: 592px; width: 197px; height: 334px; background: #181818; border: 1px solid #242424; border-radius: 0 4px 5px 5px; padding: 4px 3px; box-shadow: 0 2px 6px rgba(0,0,0,.3); letter-spacing: -.28px; }
.item { height: 25px; display: flex; align-items: center; padding: 0 6px 0 10px; gap: 9px; }
.item .i18 { margin-top: 1px; }
.item .arr { width: 7px; height: 9px; margin: 1px 0 0 auto; }
.item.hot { background: #414141; border-radius: 4px; color: #fff; height: 24px; margin-bottom: 1px; letter-spacing: -.35px; }
.item.off { color: #6e6e6e; }
.item.off .i18 { opacity: .7; }
.popup hr { border: 0; border-top: 1px solid #333; margin: 3px 4px 4px; }
.tooltip { position: absolute; left: 490px; top: 767px; width: 367px; height: 40px; background: #181818; border: 1px solid #232323; border-radius: 5px; padding: 10px 0 0 15px; color: #d0d0d0; letter-spacing: -.3px; }
```
